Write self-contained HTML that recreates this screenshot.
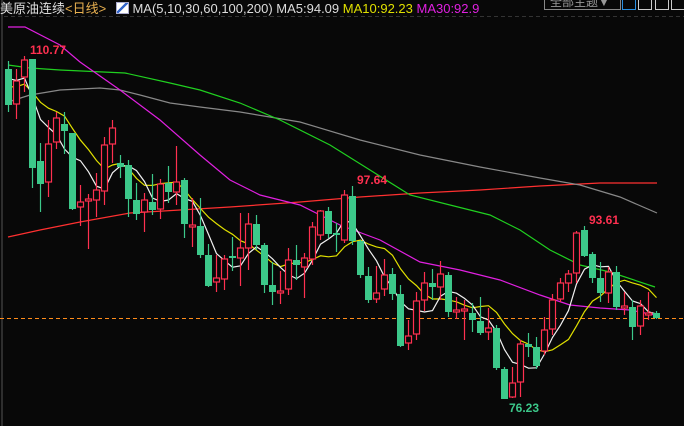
<!DOCTYPE html>
<html><head><meta charset="utf-8"><style>
html,body{margin:0;padding:0;background:#080808;width:684px;height:426px;overflow:hidden;font-family:"Liberation Sans","Noto Sans CJK SC",sans-serif}
#hdr{position:absolute;left:0;top:-2px;font-size:13px;white-space:nowrap;color:#ddd}
.btn{position:absolute;border:1px solid #888;box-sizing:border-box}
</style></head><body>
<svg id="c" width="684" height="426" style="position:absolute;left:0;top:0">
<line x1="2" y1="0" x2="2" y2="426" stroke="#555" stroke-width="1"/>
<line x1="4" y1="16.5" x2="684" y2="16.5" stroke="#333" stroke-dasharray="4,3"/>
<line x1="0" y1="318.5" x2="684" y2="318.5" stroke="#ff8c1a" stroke-dasharray="4,3"/>
<g id="ma" fill="none" stroke-width="1.2"></g>
<g id="k"></g>
<text x="30" y="54" fill="#ff3050" font-size="12" font-weight="bold" font-family="Liberation Sans">110.77</text>
<text x="357" y="184" fill="#ff3050" font-size="12" font-weight="bold" font-family="Liberation Sans">97.64</text>
<text x="589" y="224" fill="#ff3050" font-size="12" font-weight="bold" font-family="Liberation Sans">93.61</text>
<text x="509" y="412" fill="#3cc88a" font-size="12" font-weight="bold" font-family="Liberation Sans">76.23</text>
</svg>
<div id="hdr"><span>美原油连续</span><span style="color:#e8b050">&lt;日线&gt;</span>
<span style="display:inline-block;width:11px;height:10px;border:1px solid #aac;margin-left:6px;vertical-align:-1px;background:linear-gradient(135deg,#fff 40%,#36c 40%,#36c 55%,#fff 55%)"></span><span> MA(5,10,30,60,100,200)</span><span> MA5:94.09</span><span style="color:#e0e000"> MA10:92.23</span><span style="color:#e020e0"> MA30:92.9</span></div>
<div class="btn" style="left:544px;top:-4px;width:77px;height:14px;font-size:12px;color:#999;line-height:11px;padding-left:5px">全部主题▼</div>
<div class="btn" style="left:622px;top:-2px;width:14px;height:12px;border-color:#2a8fe0"></div>
<div class="btn" style="left:638px;top:-2px;width:14px;height:12px;border-color:#ccc"></div>
<div class="btn" style="left:655px;top:-2px;width:14px;height:12px;border-color:#ccc"></div>
<div class="btn" style="left:671px;top:-2px;width:14px;height:12px;border-color:#ccc"></div>
<script>
// [up?, bodyTop, bodyBot, wickTop, wickBot]
var d=[[0,69,105,61,112],[1,81,104,69,119],[1,60,77,56,92],[0,59,168,59,188],[0,161,184,143,212],[1,144,182,120,197],[1,118,142,112,149],[0,124,131,112,154],[0,133,209,133,210],[1,202,207,185,226],[1,199,201,194,249],[1,190,200,173,217],[1,145,191,137,205],[1,128,144,120,163],[0,163,167,155,178],[0,165,199,160,217],[0,200,214,183,220],[1,200,212,193,232],[0,202,210,174,215],[1,184,209,179,219],[0,183,192,166,203],[1,182,192,146,205],[0,180,224,178,238],[1,225,227,198,247],[0,226,255,198,258],[0,255,286,244,287],[1,278,282,255,292],[1,259,279,255,290],[0,256,258,237,271],[1,248,258,213,286],[1,224,248,213,270],[0,224,245,215,250],[0,245,285,243,293],[0,285,292,262,305],[1,291,293,271,304],[1,260,289,248,295],[0,260,265,245,280],[1,258,267,253,298],[1,227,259,222,265],[1,211,235,210,240],[0,211,234,207,238],[0,233,235,223,252],[1,195,240,190,243],[0,196,241,186,245],[0,241,275,240,278],[0,276,300,267,303],[1,293,299,266,303],[1,275,289,259,296],[0,274,294,268,300],[0,294,346,285,347],[1,336,343,320,350],[1,301,334,292,340],[1,283,300,272,311],[0,283,287,269,300],[1,274,287,261,300],[0,275,312,272,317],[1,310,312,297,319],[1,309,311,300,340],[0,313,320,303,332],[0,321,333,297,335],[1,328,332,308,340],[0,328,368,325,370],[0,369,399,367,399],[1,383,397,367,398],[1,344,382,340,397],[0,344,347,333,357],[0,347,366,337,369],[1,330,351,317,355],[1,300,329,294,335],[1,283,299,278,302],[1,274,283,270,292],[1,233,273,231,283],[0,230,256,226,257],[0,254,278,252,283],[0,278,293,262,302],[1,272,293,267,303],[0,272,307,266,310],[1,306,308,292,315],[0,307,327,300,340],[1,306,326,300,335],[1,313,315,292,320],[0,313,318,311,319]];
var k='',R='#ff3050',G='#3cc88a';
d.forEach(function(c,i){var x=5+8*i,cx=x+3.5,col=c[0]?R:G;
k+='<line x1="'+cx+'" x2="'+cx+'" y1="'+c[3]+'" y2="'+c[4]+'" stroke="'+col+'" stroke-width="1.2"/>';
var h=Math.max(c[2]-c[1],1.5);
if(c[0])k+='<rect x="'+(x+0.5)+'" y="'+c[1]+'" width="6" height="'+h+'" fill="#080808" stroke="'+R+'" stroke-width="1.2"/>';
else k+='<rect x="'+x+'" y="'+c[1]+'" width="7" height="'+h+'" fill="'+G+'"/>';});
document.getElementById('k').innerHTML=k;
function pl(p,c){return '<polyline points="'+p.map(function(a){return a.join(',')}).join(' ')+'" stroke="'+c+'"/>';}
var cl=d.map(function(c){return c[0]?c[1]:c[2];});
function ma(n,pad){var a=[];for(var i=0;i<cl.length;i++){var s=0;for(var j=i-n+1;j<=i;j++)s+=(j<0?pad:cl[j]);a.push([8.5+8*i,(s/n).toFixed(1)]);}return a;}
var m='';
m+=pl([[8,237],[40,230],[80,222],[130,213],[180,210],[230,207],[300,202],[360,197],[420,193],[480,190],[540,186],[600,183],[657,183]],'#ff3030');
m+=pl([[8,102],[30,95],[60,90],[100,88],[120,90],[140,95],[170,103],[200,107],[240,112],[300,122],[360,140],[420,155],[480,167],[540,178],[580,185],[620,197],[657,213]],'#888');
m+=pl([[8,65],[30,68],[60,70],[125,73],[170,83],[200,90],[240,103],[280,120],[330,145],[370,170],[410,195],[450,205],[490,215],[520,230],[550,250],[580,265],[610,272],[655,287]],'#20d020');
m+=pl([[8,27],[25,27],[60,45],[80,62],[120,90],[160,120],[200,155],[230,180],[260,195],[300,205],[340,225],[380,240],[420,262],[460,270],[500,280],[540,295],[570,305],[600,308],[630,310],[655,315]],'#e020e0');
m+=pl(ma(10,85),'#e0e000');
m+=pl(ma(5,72),'#f0f0f0');
document.getElementById('ma').innerHTML=m;
</script>
</body></html>
